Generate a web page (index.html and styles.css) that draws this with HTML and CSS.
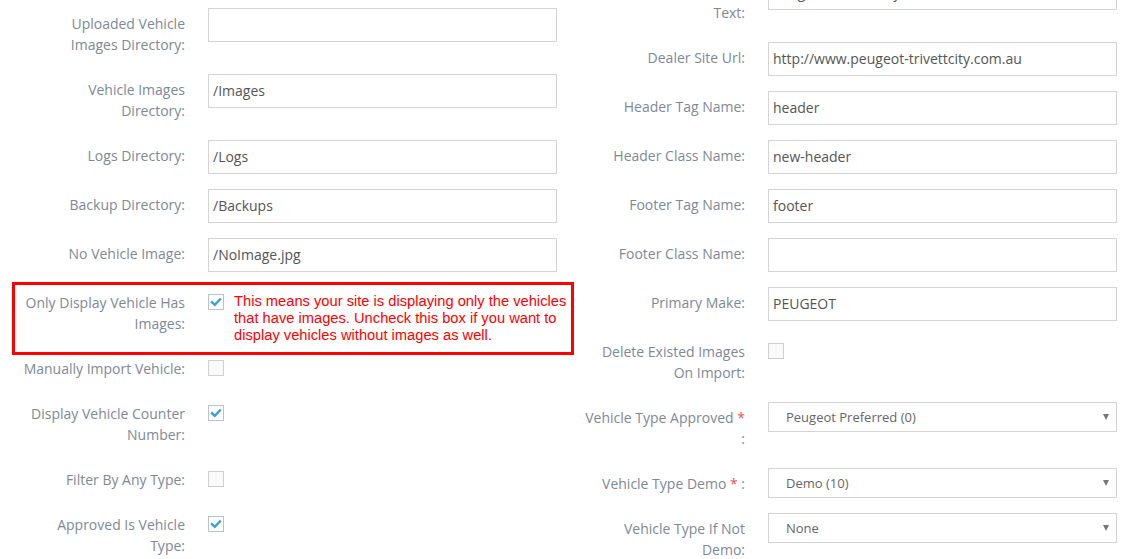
FILE: index.html
```html
<!DOCTYPE html>
<html>
<head>
    <meta charset="UTF-8">
    <title>Dealer Settings</title>
    <link rel="stylesheet" href="styles.css">
</head>
<body>
    <div class="settings-form">
        <div class="form-column left-column">
            <div class="form-group">
                <label class="control-label">Uploaded Vehicle Images Directory:</label>
                <input type="text" class="form-control" value="">
            </div>
            <div class="form-group">
                <label class="control-label">Vehicle Images Directory:</label>
                <input type="text" class="form-control" value="/Images">
            </div>
            <div class="form-group">
                <label class="control-label">Logs Directory:</label>
                <input type="text" class="form-control" value="/Logs">
            </div>
            <div class="form-group">
                <label class="control-label">Backup Directory:</label>
                <input type="text" class="form-control" value="/Backups">
            </div>
            <div class="form-group">
                <label class="control-label">No Vehicle Image:</label>
                <input type="text" class="form-control" value="/NoImage.jpg">
            </div>
            <div class="form-group highlighted">
                <label class="control-label">Only Display Vehicle Has Images:</label>
                <div class="check-cell">
                    <span class="checkbox checked">
                        <svg viewBox="0 0 16 16" width="16" height="16"><path d="M4 8.2 L6.8 10.8 L12 5.4" fill="none" stroke="#3a9fd9" stroke-width="2.4" stroke-linecap="square"/></svg>
                    </span>
                    <p class="note">This means your site is displaying only the vehicles that have images. Uncheck this box if you want to display vehicles without images as well.</p>
                </div>
            </div>
            <div class="form-group">
                <label class="control-label">Manually Import Vehicle:</label>
                <div class="check-cell"><span class="checkbox"></span></div>
            </div>
            <div class="form-group">
                <label class="control-label">Display Vehicle Counter Number:</label>
                <div class="check-cell">
                    <span class="checkbox checked">
                        <svg viewBox="0 0 16 16" width="16" height="16"><path d="M4 8.2 L6.8 10.8 L12 5.4" fill="none" stroke="#3a9fd9" stroke-width="2.4" stroke-linecap="square"/></svg>
                    </span>
                </div>
            </div>
            <div class="form-group">
                <label class="control-label">Filter By Any Type:</label>
                <div class="check-cell"><span class="checkbox"></span></div>
            </div>
            <div class="form-group">
                <label class="control-label">Approved Is Vehicle Type:</label>
                <div class="check-cell">
                    <span class="checkbox checked">
                        <svg viewBox="0 0 16 16" width="16" height="16"><path d="M4 8.2 L6.8 10.8 L12 5.4" fill="none" stroke="#3a9fd9" stroke-width="2.4" stroke-linecap="square"/></svg>
                    </span>
                </div>
            </div>
        </div>

        <div class="form-column right-column">
            <div class="form-group">
                <label class="control-label">Dealer Name Alternate Text:</label>
                <input type="text" class="form-control" value="Peugeot Trivett City">
            </div>
            <div class="form-group">
                <label class="control-label">Dealer Site Url:</label>
                <input type="text" class="form-control" value="http://www.peugeot-trivettcity.com.au">
            </div>
            <div class="form-group">
                <label class="control-label">Header Tag Name:</label>
                <input type="text" class="form-control" value="header">
            </div>
            <div class="form-group">
                <label class="control-label">Header Class Name:</label>
                <input type="text" class="form-control" value="new-header">
            </div>
            <div class="form-group">
                <label class="control-label">Footer Tag Name:</label>
                <input type="text" class="form-control" value="footer">
            </div>
            <div class="form-group">
                <label class="control-label">Footer Class Name:</label>
                <input type="text" class="form-control" value="">
            </div>
            <div class="form-group">
                <label class="control-label">Primary Make:</label>
                <input type="text" class="form-control" value="PEUGEOT">
            </div>
            <div class="form-group">
                <label class="control-label">Delete Existed Images On Import:</label>
                <div class="check-cell"><span class="checkbox"></span></div>
            </div>
            <div class="form-group">
                <label class="control-label">Vehicle Type Approved <span class="required">*</span> :</label>
                <div class="select-box"><span>Peugeot Preferred (0)</span><i class="caret"></i></div>
            </div>
            <div class="form-group">
                <label class="control-label">Vehicle Type Demo <span class="required">*</span> :</label>
                <div class="select-box"><span>Demo (10)</span><i class="caret"></i></div>
            </div>
            <div class="form-group">
                <label class="control-label">Vehicle Type If Not Demo:</label>
                <div class="select-box"><span>None</span><i class="caret"></i></div>
            </div>
        </div>
    </div>
</body>
</html>
```

FILE: styles.css
```css
:root {
    --label-color: #7e8997;
    --input-color: #555;
    --border-color: #d4d4d4;
    --check-color: #3a9fd9;
}
body {
    font-family: "Open Sans", "Noto Sans", Arial, sans-serif;
    font-size: 14px;
    background-color: #fff;
    margin: 0;
    padding: 0;
    overflow: hidden;
}
.settings-form { display: grid; grid-template-columns: 557px 560px; }
.left-column { padding-top: 8px; }
.right-column { margin-top: -24px; padding-left: 3px; }
.form-group {
    display: grid; grid-template-columns: 185px 349px; column-gap: 23px;
    align-items: start; margin-bottom: 15px;
}
.control-label {
    text-align: right; color: var(--label-color);
    padding: 5px 0 4px 22px; line-height: 21px;
}
.required { color: #f0505a; }
.form-control {
    height: 34px; box-sizing: border-box; width: 100%;
    border: 1px solid var(--border-color); border-radius: 0;
    padding: 0 4px 1px; font-family: inherit; font-size: 14px; color: var(--input-color);
    outline: none; margin: 0;
}
.check-cell { display: flex; align-items: flex-start; }
.checkbox {
    display: block; flex: none; width: 16px; height: 16px; box-sizing: border-box;
    margin-top: 7px; border: 1px solid #cfcfcf; background-color: #fafafa;
}
.checkbox.checked { border-color: #b7c3d0; background-color: #fff; }
.checkbox svg { display: block; margin: -1px; }
.note {
    flex: none; width: 345px; margin: 6px 0 -8px 10px;
    font-family: "Liberation Sans", Arial, sans-serif; font-size: 14.7px; line-height: 17px;
    color: #f00;
}
.highlighted { position: relative; }
.highlighted::after {
    content: ""; position: absolute; left: 12px; right: -17px; top: -5px; bottom: -17px;
    border: 3px solid #f00; pointer-events: none;
}
.select-box {
    display: flex; align-items: center; justify-content: space-between;
    height: 30px; box-sizing: border-box; border: 1px solid var(--border-color);
    padding: 0 7px 0 17px; font-size: 13px; color: #666;
}
.caret {
    width: 0; height: 0; border-left: 3px solid transparent; border-right: 3px solid transparent;
    border-top: 6px solid #777;
}
```
